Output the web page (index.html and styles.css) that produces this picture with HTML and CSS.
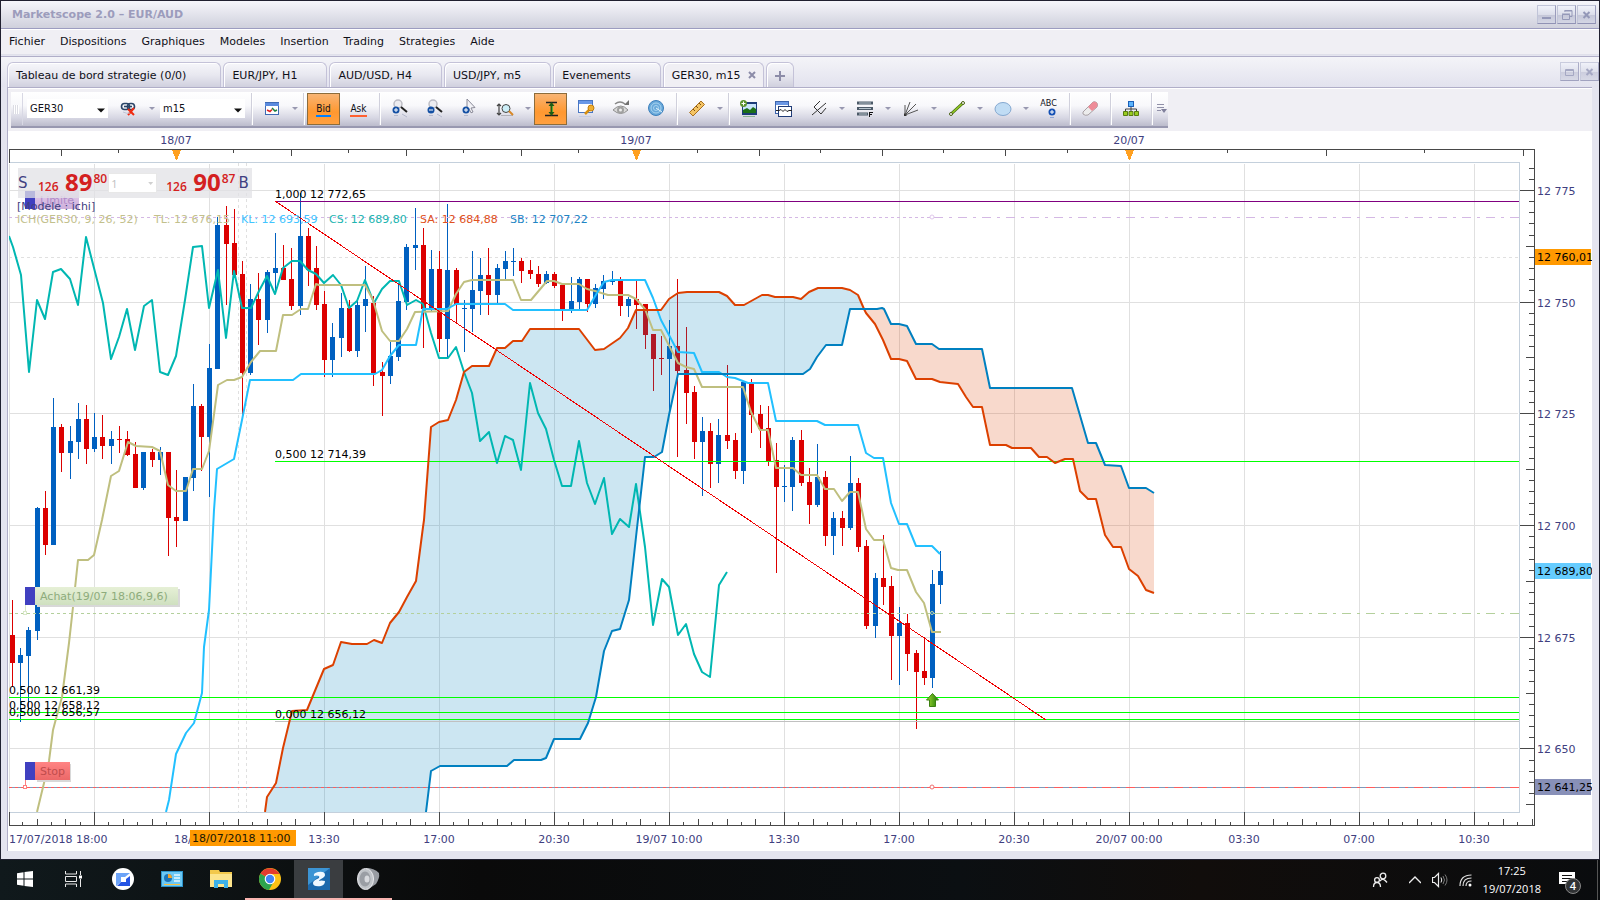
FILE: index.html
```html
<!DOCTYPE html>
<html lang="fr">
<head>
  <meta charset="UTF-8">
  <meta name="viewport" content="width=device-width, initial-scale=1.0">
  <title>Marketscope 2.0 – EUR/AUD</title>
  <link rel="stylesheet" href="styles.css">
</head>
<body>
  <div class="window">
    <header class="title-bar">
      <h1>Marketscope 2.0 – EUR/AUD</h1>
      <div class="win-buttons">
        <button class="win-btn" aria-label="Minimize"><svg viewBox="0 0 17 17"><path d="M4 12h9" stroke-width="2"/></svg></button>
        <button class="win-btn" aria-label="Restore"><svg viewBox="0 0 17 17"><path d="M4.500 8.500h7v5h-7zM4 8h8M7 5.500v-1h7v6h-2M6 5h8"/></svg></button>
        <button class="win-btn" aria-label="Close"><svg viewBox="0 0 17 17"><path d="M5.500 6l6 6M11.500 6l-6 6" stroke-width="2"/></svg></button>
      </div>
    </header>

    <nav class="menu-bar">
      <button>Fichier</button>
      <button>Dispositions</button>
      <button>Graphiques</button>
      <button>Modeles</button>
      <button>Insertion</button>
      <button>Trading</button>
      <button>Strategies</button>
      <button>Aide</button>
    </nav>

    <div class="tab-strip">
      <div class="tabs">
        <button class="tab board">Tableau de bord strategie (0/0)</button>
        <button class="tab">EUR/JPY, H1</button>
        <button class="tab">AUD/USD, H4</button>
        <button class="tab">USD/JPY, m5</button>
        <button class="tab">Evenements</button>
        <button class="tab active">GER30, m15 <svg width="8" height="8" viewBox="0 0 8 8"><path d="M1 1l6 6M7 1l-6 6" stroke="#8c8ca8" stroke-width="2"/></svg></button>
        <button class="tab add" aria-label="New tab"><svg width="12" height="12" viewBox="0 0 12 12"><path d="M6 1v10M1 6h10" stroke="#8c8ca8" stroke-width="2"/></svg></button>
      </div>
      <div class="win-buttons light">
        <button class="win-btn" aria-label="Maximize"><svg viewBox="0 0 17 17"><path d="M4.500 6.500h8v6h-8zM4 7.500h9"/></svg></button>
        <button class="win-btn" aria-label="Close chart"><svg viewBox="0 0 17 17"><path d="M5.500 6l6 6M11.500 6l-6 6" stroke-width="2"/></svg></button>
      </div>
    </div>

    <main class="panel">
      <div class="toolbar-row">
        <div class="toolbar">
          <span class="grip"></span>
          <span class="combo"><select aria-label="Symbol"><option>GER30</option></select></span>
          <button class="tool" aria-label="Unlink">
            <svg viewBox="0 0 20 20"><g fill="none" stroke="#2c4668" stroke-width="1.600"><rect x="2.500" y="4.500" width="8" height="6" rx="3"/><rect x="8.500" y="4.500" width="7" height="6" rx="3"/><path d="M5 7.500h8"/></g><path d="M9 10l6 6M15 9l-6 7" stroke="#f02a10" stroke-width="2"/><path d="M4 13q4 2 7 1" stroke="#c0c4d4" fill="none"/></svg>
          </button>
          <button class="drop" aria-label="Link options"></button>
          <span class="combo wide"><select aria-label="Period"><option>m15</option></select></span>
          <span class="sep"></span>
          <button class="tool" aria-label="Chart type">
            <svg viewBox="0 0 20 20"><rect x="3.500" y="3.500" width="13" height="12" fill="#fff" stroke="#3f6ab4"/><path d="M3 4h14v3H3z" fill="#5a8ade"/><path d="M5 11l3 1.500 2-2" fill="none" stroke="#e02020" stroke-width="1.500"/><path d="M10 9l3 3 2-1" fill="none" stroke="#208040" stroke-width="1.500"/><path d="M4 17.500h12" stroke="#d8dcec"/></svg>
          </button>
          <button class="drop" aria-label="Chart type options"></button>
          <span class="sep"></span>
          <button class="tool side on"><span class="bid">Bid</span></button>
          <button class="tool side"><span class="ask">Ask</span></button>
          <span class="sep"></span>
          <button class="tool" aria-label="Zoom in">
            <svg viewBox="0 0 20 20"><circle cx="8" cy="5" r="4" fill="#ececf0" stroke="#bcbcc4" stroke-width="1.500"/><path d="M11 8l6 5" stroke="#222" stroke-width="2"/><circle cx="6" cy="11" r="3.500" fill="#1450a4"/><path d="M4 11h4M6 9v4" stroke="#fff"/><path d="M4 16.500h4M12 15l5 3" stroke="#b4b8cc"/></svg>
          </button>
          <button class="tool" aria-label="Zoom out">
            <svg viewBox="0 0 20 20"><circle cx="8" cy="5" r="4" fill="#ececf0" stroke="#bcbcc4" stroke-width="1.500"/><path d="M11 8l6 5" stroke="#222" stroke-width="2"/><circle cx="6" cy="11" r="3.500" fill="#1450a4"/><path d="M4 11h4" stroke="#fff"/><path d="M4 16.500h4M12 15l5 3" stroke="#b4b8cc"/></svg>
          </button>
          <button class="tool" aria-label="Add pointer">
            <svg viewBox="0 0 20 20"><path d="M7 0l8 8.500-4 .5 2 4-2 .8-2-4-2 2z" fill="#f2f2f6" stroke="#8a8a98"/><circle cx="6" cy="11" r="3.500" fill="#1450a4"/><path d="M4 11h4M6 9v4" stroke="#fff"/><path d="M4 16.500h4" stroke="#b4b8cc"/></svg>
          </button>
          <button class="tool" aria-label="Zoom area">
            <svg viewBox="0 0 20 20"><path d="M4 5v11M2 7l2-2 2 2M2 14l2 2 2-2" fill="none" stroke="#444" stroke-width="1.200"/><path d="M6 16.500h12" stroke="#b0b0b8"/><circle cx="11" cy="9.500" r="4" fill="#cceef8" stroke="#444"/><path d="M14 12l4 4" stroke="#d88828" stroke-width="2"/></svg>
          </button>
          <button class="drop" aria-label="Zoom options"></button>
          <button class="tool on" aria-label="Auto scale">
            <svg viewBox="0 0 20 20"><path d="M5 3.500h11M4 16.500h13" stroke="#222" stroke-width="1.500"/><path d="M10.500 3l3 4h-2v6h2l-3 4-3-4h2V7h-2z" fill="#1e5c14"/><path d="M11.500 7v6" stroke="#60b030"/></svg>
          </button>
          <button class="tool" aria-label="Edit properties">
            <svg viewBox="0 0 20 20"><rect x="2.500" y="1.500" width="14" height="12" fill="#fff" stroke="#4876c4"/><path d="M3 2h13v3H3z" fill="#6a98e8"/><path d="M9 15l5-5" stroke="#d89010" stroke-width="2.500"/><circle cx="15" cy="9" r="3" fill="#f0b030" stroke="#c07c10"/><path d="M3 17.500h12" stroke="#c4cce4"/></svg>
          </button>
          <button class="tool" aria-label="Toggle visibility">
            <svg viewBox="0 0 20 20"><path d="M2 11q8-8 15 0-7 7-15 0z" fill="#d8d8d8" stroke="#909090"/><circle cx="9.500" cy="11" r="3.500" fill="#a0a0a0"/><circle cx="9.500" cy="11" r="1.500" fill="#eee"/><path d="M4 5q5-4 10 0" fill="none" stroke="#888" stroke-width="1.500"/><path d="M13 6h5V1z" fill="#707070"/></svg>
          </button>
          <button class="tool" aria-label="Radar">
            <svg viewBox="0 0 20 20"><circle cx="10" cy="9" r="7.500" fill="#68a8da" stroke="#3c80bc"/><circle cx="10" cy="9" r="5" fill="none" stroke="#a8d4f0"/><circle cx="10" cy="9" r="2.500" fill="none" stroke="#a8d4f0"/><path d="M10 9l6 4" stroke="#e4f4fc"/></svg>
          </button>
          <span class="sep"></span>
          <button class="tool" aria-label="Ruler">
            <svg viewBox="0 0 20 20"><path d="M2.500 13.500L14 2l3.500 3.500L6 17z" fill="#f4c464" stroke="#a87020"/><path d="M6 10l2 2M9 7l2 2M12 4l2 2" stroke="#7c5010"/></svg>
          </button>
          <button class="drop" aria-label="Ruler options"></button>
          <span class="sep"></span>
          <button class="tool" aria-label="Add indicator">
            <svg viewBox="0 0 20 20"><rect x="3" y="3" width="15" height="13" fill="#1c3c78"/><path d="M4 5h13v7H4z" fill="#c8e4fc"/><path d="M4 14v-3l4-2 3 2 3-3 3 2v4z" fill="#1c7018"/><circle cx="4.500" cy="4.500" r="3.500" fill="#5c9430"/><path d="M2.500 4.500h4M4.500 2.500v4" stroke="#fff"/><path d="M4 17.500h12" stroke="#88b490"/></svg>
          </button>
          <button class="tool" aria-label="Add chart window">
            <svg viewBox="0 0 20 20"><rect x="1.500" y="2.500" width="13" height="12" fill="#fff" stroke="#3c64ac"/><path d="M2 3h12v3H2z" fill="#6c98e4"/><rect x="4.500" y="7.500" width="13" height="10" fill="#fff" stroke="#203c78"/><path d="M2 11.500h3l2-1 2 2 2-2 2 2 2-1h3" fill="none" stroke="#222"/></svg>
          </button>
          <button class="tool" aria-label="Pitchfork">
            <svg viewBox="0 0 20 20"><path d="M3 16l14-12M5 8l7 7M5 8l6-6M12 15l5-6" fill="none" stroke="#333"/></svg>
          </button>
          <button class="drop" aria-label="Pitchfork options"></button>
          <button class="tool" aria-label="Fibonacci">
            <svg viewBox="0 0 20 20"><path d="M2 4h16M2 9.500h16M2 15h11" stroke="#4c5a68" stroke-width="3"/><path d="M4 4h12M4 9.500h12M4 15h8" stroke="#b8c4cc"/><path d="M14.500 18v-5M14 13.500h4M14 15.500h3" stroke="#111" fill="none"/></svg>
          </button>
          <button class="drop" aria-label="Fibonacci options"></button>
          <button class="tool" aria-label="Fan">
            <svg viewBox="0 0 20 20"><path d="M4 16V6M4 16L9 3M4 16L15 5M4 16l13-5" fill="none" stroke="#555"/><path d="M3 14v3h3z" fill="#333"/></svg>
          </button>
          <button class="drop" aria-label="Fan options"></button>
          <button class="tool" aria-label="Line">
            <svg viewBox="0 0 20 20"><path d="M4 15L16 4" stroke="#486c10" stroke-width="3"/><path d="M4 15L16 4" stroke="#94cc28" stroke-width="1.500"/><circle cx="4" cy="15" r="1.500" fill="#fff" stroke="#486010"/><circle cx="16" cy="4" r="1.500" fill="#fff" stroke="#486010"/></svg>
          </button>
          <button class="drop" aria-label="Line options"></button>
          <button class="tool" aria-label="Ellipse">
            <svg viewBox="0 0 20 20"><ellipse cx="10" cy="10" rx="8" ry="6.500" fill="#c0dcf4" stroke="#84a8d0"/></svg>
          </button>
          <button class="drop" aria-label="Shape options"></button>
          <button class="tool abc" aria-label="Text label"><span>ABC</span>
            <svg viewBox="0 0 20 12"><circle cx="13" cy="4" r="3.500" fill="#1450b4"/><path d="M11 4h4M13 2v4" stroke="#fff"/><path d="M11 9.500h4" stroke="#90a8d8"/></svg>
          </button>
          <span class="sep"></span>
          <button class="tool" aria-label="Eraser">
            <svg viewBox="0 0 20 20"><path d="M3 13L13 3q2-1 4 1 1 2 0 4L8 16q-3 1-5-1z" fill="#ececec" stroke="#a8a0a4"/><path d="M8 8l5-5q2-1 4 1 1 2 0 4l-5 4z" fill="#ee8c98"/></svg>
          </button>
          <span class="sep"></span>
          <button class="tool" aria-label="Object tree">
            <svg viewBox="0 0 20 20"><rect x="7.500" y="2.500" width="5" height="5" fill="#5cb4fc" stroke="#1c60b8"/><path d="M10 8v5M4.500 13v-3h11v3" fill="none" stroke="#444"/><path d="M2.500 12.500h4v4h-4zM8 12.500h4v4H8zM13.500 12.500h4v4h-4z" fill="#98cc20" stroke="#587c10"/></svg>
          </button>
          <span class="sep"></span>
          <button class="overflow" aria-label="More tools"><svg width="10" height="10" viewBox="0 0 10 10"><path d="M0 1.500h7M0 4.500h7M0 7.500h4" stroke="#9090a8"/><path d="M4 6h6l-3 4z" fill="#80809c"/></svg></button>
        </div>
      </div>

      <div class="chart">
        <svg class="chart-svg" viewBox="8 131 1584 720" role="img" aria-label="GER30 m15">
          <defs>
            <linearGradient id="buyFill" x2="0" y2="1"><stop stop-color="#e6f0d6"/><stop offset="1" stop-color="#cfe0c0"/></linearGradient>
            <linearGradient id="stopFill" x2="0" y2="1"><stop stop-color="#ff8484"/><stop offset="1" stop-color="#ec6868"/></linearGradient>
            <linearGradient id="limitFill" x2="0" y2="1"><stop stop-color="#e4ccec"/><stop offset="1" stop-color="#ceb0dc"/></linearGradient>
            <linearGradient id="arrowFill"><stop stop-color="#a4dc30"/><stop offset="1" stop-color="#1c7808"/></linearGradient>
            <clipPath id="plot"><path d="M9 162h1510v650H9z"/></clipPath>
          </defs>
          <g id="grid" class="grid"></g>
          <g clip-path="url(#plot)">
            <g id="candles" class="crisp"></g>
            <g id="clouds"></g>
            <g id="levels" class="crisp"></g>
            <g id="lines"></g>
            <path class="trend" d="M275 201L1046 720"/>
          </g>
          <g id="axes" class="axes"></g>

          <g class="tag">
            <path d="M25 191h10v18H25z" fill="#4040c0"/>
            <path d="M35 191h44v18H35z" fill="url(#limitFill)"/>
            <text x="40" y="204" fill="#b08cc8">Limite</text>
          </g>
          <text x="17" y="210" fill="#404080">[Modele : ichi]</text>
          <g class="legend">
            <text x="17" y="223" fill="#c2c08c">ICH(GER30, 9, 26, 52)</text>
            <text x="154" y="223" fill="#c2c08c">TL: 12 676,15</text>
            <text x="241" y="223" fill="#40c4ff">KL: 12 693,59</text>
            <text x="329" y="223" fill="#20b4b0">CS: 12 689,80</text>
            <text x="420" y="223" fill="#e05020">SA: 12 684,88</text>
            <text x="510" y="223" fill="#2084c4">SB: 12 707,22</text>
          </g>

          <g class="fib">
            <text x="275" y="198">1,000 12 772,65</text>
            <text x="275" y="458">0,500 12 714,39</text>
            <text x="275" y="718">0,000 12 656,12</text>
            <text x="9" y="694">0,500 12 661,39</text>
            <text x="9" y="709">0,500 12 658,12</text>
            <text x="9" y="716">0,500 12 656,57</text>
          </g>

          <g class="tag">
            <path d="M37 589h143v18H37z" fill="#d8d8d8"/>
            <path d="M25 587h10v18H25z" fill="#4040c0"/>
            <path d="M35 587h143v18H35z" fill="url(#buyFill)"/>
            <path d="M25.500 605v6" stroke="#d8e8c8"/><circle cx="25" cy="613" r="2" fill="#fff" stroke="#d8e8c8"/>
            <text x="40" y="600" fill="#8eac7c">Achat(19/07 18:06,9,6)</text>
          </g>
          <g class="tag">
            <path d="M37 764h34v18H37z" fill="#d8d8d8"/>
            <path d="M25 762h10v18H25z" fill="#4040c0"/>
            <path d="M35 762h35v18H35z" fill="url(#stopFill)"/>
            <path d="M25.500 780v6" stroke="#ff8080"/><circle cx="25" cy="787" r="2" fill="#fff" stroke="#ff8080"/>
            <text x="40" y="775" fill="#c04c4c">Stop</text>
          </g>
          <circle cx="932" cy="217" r="2" fill="#fff" stroke="#e0c8ec"/>
          <circle cx="932" cy="613" r="1.500" fill="none" stroke="#c0d8a8"/>
          <circle cx="932" cy="787" r="2" fill="#fff" stroke="#f07070"/>
          <path d="M932.500 693.500l6 6.500h-3v6.500h-6v-6.500h-3z" fill="url(#arrowFill)" stroke="#3c8010"/>

          <g class="price-box">
            <path d="M1535 249h56v16h-56z" fill="#ff9900"/><text x="1537" y="261">12 760,01</text>
            <path d="M1535 563h56v16h-56z" fill="#66ccff"/><text x="1537" y="575">12 689,80</text>
            <path d="M1535 779h56v16h-56z" fill="#8890b8"/><text x="1537" y="791">12 641,25</text>
          </g>
          <text class="axis-text" x="174" y="843">18/</text>
          <path d="M190 830h106v16H190z" fill="#ff9900"/>
          <text x="192" y="842" fill="#201800">18/07/2018 11:00</text>
        </svg>

        <div class="quote">
          <span class="side-letter">S</span>
          <span class="q-small">126</span><span class="q-big">89</span><span class="q-sup">80</span>
          <span class="amount"><select aria-label="Amount"><option>1</option></select></span>
          <span class="q-small">126</span><span class="q-big">90</span><span class="q-sup">87</span>
          <span class="side-letter buy">B</span>
        </div>
      </div>
    </main>
  </div>

  <footer class="taskbar">
    <div class="apps">
      <button class="app" aria-label="Start"><svg viewBox="0 0 24 24"><path d="M4 6.200l6.500-1v6.300H4zM11.500 5L20 4v7.500h-8.500zM4 12.500h6.500v6.300L4 17.800zM11.500 12.500H20V20l-8.500-1z" fill="#fff"/></svg></button>
      <button class="app" aria-label="Task view"><svg viewBox="0 0 24 24"><path d="M3.500 4v3h11V4M3.500 20v-3h11v3M3.500 9.500h11v5h-11zM18.500 4v4M18.500 12v8" fill="none" stroke="#e8e8e8"/><path d="M17 8.500h3v3h-3z" fill="#fff"/></svg></button>
      <button class="app" aria-label="Browser"><svg viewBox="0 0 24 24"><circle cx="12" cy="12" r="11" fill="#fff"/><path d="M5 6h14l-5 4h-4v5l-5 4z" fill="#6ca4f8"/><path d="M19 9v10H6l4-4h5v-3z" fill="#2454e4"/></svg></button>
      <button class="app" aria-label="Control panel"><svg viewBox="0 0 24 24"><rect x="1.500" y="4.500" width="21" height="15" fill="#6cc8f4" stroke="#2c94cc"/><circle cx="8" cy="11" r="4" fill="#1c74b8"/><path d="M8 11V7a4 4 0 0 1 4 4z" fill="#f4a428"/><path d="M14 8h6M14 11h6M14 14h6" stroke="#e4f6ff" stroke-width="1.500"/><path d="M4 17.500h16" stroke="#f8c040"/></svg></button>
      <button class="app" aria-label="Explorer"><svg viewBox="0 0 24 24"><path d="M1 3h9l1 2h12v15H1z" fill="#f2c84c"/><path d="M1 7h22v13H1z" fill="#fce48c"/><path d="M5 21v-8h14v8h-4v-4H9v4z" fill="#3cb0e8"/></svg></button>
      <button class="app open" aria-label="Chrome"><svg viewBox="0 0 24 24"><circle cx="12" cy="12" r="11" fill="#fbc116"/><path d="M12 12L2.500 6.500A11 11 0 0 0 11 23l5-9z" fill="#2da44e"/><path d="M12 12L2.500 6.500A11 11 0 0 1 21.500 7H12z" fill="#e33b2e"/><circle cx="12" cy="12" r="5.300" fill="#fff"/><circle cx="12" cy="12" r="4.200" fill="#4285f4"/></svg></button>
      <button class="app open current" aria-label="Trading Station"><svg viewBox="0 0 24 24"><rect x="1" y="1" width="22" height="22" fill="#1c68ac"/><path d="M1 1h22L1 18z" fill="#3c94d4"/><path d="M7 9q-1-3 4-4 7-1 7 3 0 2-4 4-2 1-2 2 2-1 6 0 0 4-4 5-8 1-8-3 0-2 4-4 3-1 2-3-2-1-5 0z" fill="#f0f8ff"/></svg></button>
      <button class="app open" aria-label="Sound"><svg viewBox="0 0 24 24"><path d="M10 1q8 0 13 5 1 5-3 11l-9 6z" fill="#989ca2"/><ellipse cx="9.500" cy="12" rx="8" ry="10.500" fill="#c0c4c8" stroke="#e8e8ec"/><ellipse cx="9" cy="12" rx="5.500" ry="7.500" fill="#9a9ea4"/><ellipse cx="11" cy="12" rx="2.500" ry="3.500" fill="#d8dade"/></svg></button>
    </div>
    <div class="tray">
      <button class="people" aria-label="People"><svg width="16" height="16" viewBox="0 0 16 16"><g fill="none" stroke="#eee" stroke-width="1.300"><circle cx="11" cy="4" r="2.800"/><circle cx="5" cy="8" r="2.400"/><path d="M1.500 15q0-4.500 3.500-4.500T8.500 15M8 9q3-4 7 1.500"/></g></svg></button>
      <button aria-label="Hidden icons"><svg width="12" height="16" viewBox="0 0 12 16"><path d="M0 11l6-6 6 6" fill="none" stroke="#eee" stroke-width="1.400"/></svg></button>
      <button aria-label="Volume"><svg width="16" height="16" viewBox="0 0 16 16"><path d="M.5 5.500h2l4-4v13l-4-4h-2z" fill="none" stroke="#eee" stroke-width="1.200"/><path d="M9 5.500q1.500 2.500 0 5" fill="none" stroke="#eee"/><path d="M11 4q3 4 0 8M13 2.500q4 5.500 0 11" fill="none" stroke="#777"/></svg></button>
      <button aria-label="Network"><svg width="13" height="14" viewBox="0 0 13 14"><path d="M1 13Q1 2 12.500 2M4 13Q4 5 12.500 5M7 13Q7 8 12.500 8" fill="none" stroke="#ddd" stroke-width="1.200"/><circle cx="11" cy="12" r="1.500" fill="#fff"/></svg></button>
      <div class="clock"><time>17:25</time><span>19/07/2018</span></div>
      <button class="notif" aria-label="Notifications"><svg width="18" height="18" viewBox="0 0 18 18"><path d="M1 1h16v12h-5l-3 3v-3H1z" fill="#fff"/><path d="M4 4.500h10M4 7.500h10M4 10.500h6" stroke="#111"/></svg><span>4</span></button>
      <span class="show-desktop"></span>
    </div>
  </footer>
  <script src="chart.js"></script>
</body>
</html>
```
FILE: styles.css
```css
* {
  box-sizing: border-box;
}

:root {
  --face: #f0eff4;
  --edge: #b0aec8;
  --lilac: #e4e4ef;
  --ink: #404080;
  --sans: "DejaVu Sans", Verdana, sans-serif;
}

body {
  margin: 0;
  font-family: var(--sans);
  font-size: 11px;
  color: #101018;
  background: #0a0c0e;
}

button,
select {
  margin: 0;
  padding: 0;
  border: 0;
  background: none;
  font: inherit;
  color: inherit;
}

/* Window frame */
.window {
  border: 1px solid #202030;
  background: var(--lilac);
}

.title-bar {
  display: flex;
  align-items: center;
  justify-content: space-between;
  height: 28px;
  padding: 0 3px 0 11px;
  background: linear-gradient(#f6f6fb, #cfd0dc);
  border-bottom: 1px solid #9c9cc0;
}

.title-bar h1 {
  margin: 0;
  font-size: 11px;
  font-weight: bold;
  color: #9c9cbc;
}

.win-buttons {
  display: flex;
  gap: 1px;
}

.win-btn {
  width: 19px;
  height: 19px;
  border: 1px solid #b4b8d0;
  border-color: #c0c4d8 #9a9cbc #9092b4 #c0c4d8;
  background: linear-gradient(#f0f2fa, #dcdeea 50%, #c4c6d8 51%, #d4d6e4);
}

.win-btn svg {
  display: block;
  fill: none;
  stroke: #9498b8;
}

.light {
  opacity: 0.8;
}

.menu-bar {
  display: flex;
  gap: 15px;
  height: 26px;
  padding: 0 8px 2px;
  background: var(--face);
  border-top: 1px solid #fff;
  border-bottom: 1px solid #e0e0ea;
}

/* Tabs */
.tab-strip {
  display: flex;
  justify-content: space-between;
  align-items: flex-end;
  height: 31px;
  margin-top: 1px;
  padding-left: 6px;
  border-top: 1px solid var(--edge);
  background: linear-gradient(#f4f4f8, #e2e2ee);
}

.tab-strip .win-buttons {
  align-self: flex-start;
  margin-top: 5px;
}

.tabs {
  display: flex;
  gap: 2px;
}

.tab {
  height: 25px;
  padding: 0 29px 0 8px;
  border: 1px solid #c4c2d8;
  border-bottom: 0;
  border-radius: 6px 6px 0 0;
  background: linear-gradient(#f6f6fa, #e8e8f0 50%, #d0d0de);
  box-shadow: inset 1px 1px #fff;
}

.tab.board {
  padding-right: 34px;
}

.tab.active {
  padding-right: 7px;
  background: var(--face);
}

.tab.active svg {
  margin-left: 4px;
}

.tab.add {
  width: 28px;
  padding: 4px 0 0;
}

/* Toolbar */
.panel {
  margin: 0 7px 8px 6px;
  border: 1px solid var(--edge);
  border-width: 1px 0 0 1px;
  background: #fff;
}

.toolbar-row {
  display: flex;
  padding: 3px 3px 4px;
  height: 43px;
  border-top: 1px solid #fff;
  background: var(--face);
}

.toolbar {
  display: flex;
  align-items: center;
  height: 36px;
  border-bottom: 2px solid #9898b0;
  background: linear-gradient(#fff, #f8f8fb 40%, #d8d8e4 75%, #bcbccc);
}

.grip {
  width: 12px;
  height: 32px;
  margin-right: 4px;
  border-right: 1px solid #d8d8e4;
  background: repeating-linear-gradient(90deg, #dcdce4 0 1px, #fff 1px 2px) 2px 12px / 6px 9px no-repeat;
}

.combo {
  position: relative;
  width: 81px;
  height: 19px;
  margin: 0 4px 2px 0;
  background: #fff;
}

.combo.wide {
  width: 85px;
  margin-left: 2px;
}

.combo select {
  width: 100%;
  height: 19px;
  padding: 0 3px;
  appearance: none;
  font-family: "DejaVu Sans Condensed", "DejaVu Sans", sans-serif;
}

.combo::after {
  content: "";
  position: absolute;
  right: 1px;
  bottom: 0;
  width: 13px;
  height: 14px;
  background: #111;
  clip-path: polygon(3px 5px, 11px 5px, 7px 9px);
}

.tool {
  display: flex;
  align-items: center;
  justify-content: center;
  width: 33px;
  height: 32px;
  margin-right: 2px;
}

.tool svg {
  width: 20px;
  height: 20px;
}

.tool.on {
  border: 1px solid #8c6c3c;
  background: linear-gradient(#f8b474, #ff9830 60%, #ffa040);
}

.side {
  font-family: "DejaVu Sans Condensed", "DejaVu Sans", sans-serif;
  font-size: 10px;
}

.bid,
.ask {
  line-height: 13px;
  border-bottom: 2px solid #0080ff;
}

.ask {
  border-color: #ff6030;
}

.abc {
  flex-direction: column;
  font-family: "DejaVu Sans Condensed", "DejaVu Sans", sans-serif;
  font-size: 9px;
  line-height: 9px;
}

.abc svg {
  height: 12px;
}

.drop {
  width: 11px;
  height: 32px;
  background: #9898b0;
  clip-path: polygon(2px 14px, 8px 14px, 5px 17px);
}

.sep {
  width: 2px;
  height: 32px;
  margin: 0 2px;
  border-left: 1px solid #d0d0dc;
  border-right: 1px solid #fff;
}

.overflow {
  width: 13px;
  height: 32px;
}

/* Chart */
.chart {
  position: relative;
}

.chart-svg {
  display: block;
  width: 100%;
  height: auto;
  font-size: 11px;
}

.grid,
.axes,
.crisp,
.tag,
.trend {
  shape-rendering: crispEdges;
}

.grid path {
  fill: none;
  stroke: #e0e0e0;
}

.grid .dashed {
  stroke-dasharray: 3 3;
}

.axes path {
  fill: none;
  stroke: #484848;
}

.axes .frame {
  stroke: #c4d0dc;
}

.axes .day {
  fill: #ffa020;
  stroke: none;
}

.axes text,
.axis-text {
  fill: var(--ink);
}

.axes .mid {
  text-anchor: middle;
}

.trend {
  fill: none;
  stroke: #f00000;
}

.up {
  fill: #0060c0;
}

.down {
  fill: #dc0000;
}

.line {
  fill: none;
  stroke-width: 2;
  stroke-linejoin: round;
}

.tl { stroke: #bfbf7f; }
.kl { stroke: #22c0ff; }
.cs { stroke: #00b7b2; }
.sa { stroke: #dc4000; }
.sb { stroke: #0080c0; }

.cloud-up {
  fill: #0080c0;
  opacity: 0.2;
}

.cloud-down {
  fill: #dc4000;
  opacity: 0.2;
}

.quote {
  position: absolute;
  left: 10px;
  top: 37px;
  display: flex;
  align-items: center;
  width: 234px;
  height: 30px;
  background: rgba(226, 226, 229, 0.75);
  color: #d42020;
  font-family: "Open Sans", sans-serif;
}

.side-letter {
  width: 11px;
  font: 15px var(--sans);
  color: var(--ink);
}

.side-letter.buy {
  margin-left: 3px;
}

.q-small {
  width: 20px;
  margin: 6px 7px 0 9px;
  font-size: 12px;
  font-weight: 600;
}

.q-big {
  margin-bottom: 4px;
  font-size: 24px;
  font-weight: bold;
}

.q-sup {
  margin: -10px 0 0 1px;
  font-size: 12px;
  font-weight: 600;
}

.amount {
  position: relative;
  width: 49px;
  height: 20px;
  margin-left: 1px;
  background: #fff;
  border: 1px solid #e8e8e8;
  color: #c0c0c0;
}

.amount select {
  width: 100%;
  height: 18px;
  padding-left: 2px;
  appearance: none;
}

.amount::after {
  content: "";
  position: absolute;
  right: 3px;
  top: 8px;
  width: 5px;
  height: 3px;
  background: #d0d0d0;
  clip-path: polygon(0 0, 100% 0, 50% 100%);
}

/* Taskbar */
.taskbar {
  display: flex;
  justify-content: space-between;
  height: 40px;
  background: linear-gradient(90deg, #10191c, #0a0a0a 30%, #0b0f12 60%, #110d0b 75%, #0a0c0e);
  color: #fff;
}

.apps {
  display: flex;
}

.app {
  display: flex;
  align-items: center;
  justify-content: center;
  width: 49px;
  border-bottom: 2px solid transparent;
}

.app svg {
  width: 24px;
  height: 24px;
}

.app.open {
  border-color: #f8b4b0;
}

.app.current {
  background: #3a3d40;
}

.tray {
  display: flex;
  align-items: center;
  gap: 11px;
}

.tray svg {
  display: block;
}

.people {
  margin-right: 10px;
}

.clock {
  display: flex;
  flex-direction: column;
  align-items: center;
  font: 11px/18px "Open Sans", sans-serif;
}

.notif {
  position: relative;
  margin: 0 10px 0 6px;
}

.notif span {
  position: absolute;
  left: 7px;
  top: 7px;
  width: 16px;
  height: 16px;
  border: 1px solid #888;
  border-radius: 50%;
  background: #303234;
  font: 600 11px/14px "Open Sans", sans-serif;
}

.show-desktop {
  height: 40px;
  width: 3px;
  border-left: 1px solid #555;
}
```
FILE: chart.js
```js
// high, body top, body bottom, low for every m15 bar; r = falling, b = rising
const bars = `
r600,635,663,687 b648,655,663,722 b627,630,656,710 b507,508,631,640 r491,508,545,555 b398,427,545,545
r424,427,453,472 b426,441,453,479 b403,419,442,459 r405,419,449,464 b413,437,449,452 r415,437,446,459
b431,439,446,464 r426,439,440,453 r431,439,455,456 r442,454,488,488 b452,452,488,490 r449,452,460,467
b447,452,460,475 r452,452,518,556 r470,517,521,547 b477,477,521,521 b384,406,478,491 r404,406,437,471
b344,368,437,497 b217,225,369,369 r206,225,244,305 r209,243,275,275 r261,274,373,417 b284,299,373,375
r273,299,320,345 b270,272,320,333 b233,268,273,290 r245,268,280,280 r248,279,306,310 b193,236,306,315
r228,236,270,286 r246,268,305,310 r291,304,360,377 b323,337,360,377 b293,308,338,357 r300,308,351,352
b298,305,351,357 b266,299,306,332 r296,303,373,386 r362,372,376,416 b342,356,376,384 b283,301,357,361
b244,247,302,310 b208,245,248,270 r228,245,309,348 b250,269,309,311 r251,269,339,352 b204,270,339,357
r268,270,304,324 b300,308,309,352 b251,290,309,332 b258,275,291,315 r248,275,295,315 b264,268,295,303
b251,261,269,279 b248,261,262,276 r258,261,271,283 r260,270,274,279 r266,274,284,287 b271,274,283,284
r272,274,286,288 r285,285,309,321 b277,301,309,313 b277,279,302,309 r279,279,304,312 b284,288,304,308
b275,281,289,299 b271,281,282,285 r277,279,306,316 b297,299,306,317 r280,299,305,329 r304,304,335,349
r334,334,359,391 r336,358,359,375 b320,346,359,412 r279,346,371,457 r327,370,393,424 r386,392,442,459
b417,431,442,496 r423,431,464,488 b419,435,464,483 r365,435,441,449 r433,440,471,479 b382,382,471,484
r379,384,415,433 r405,414,429,448 r406,428,461,466 r443,460,487,573 b465,486,487,502 b437,440,487,511
r430,440,483,486 r468,482,505,524 b444,477,505,507 r471,477,536,546 b512,518,536,555 r511,518,528,546
b456,483,528,530 r478,483,547,552 r540,546,626,629 b573,578,626,638 r535,578,587,605 r576,586,636,680
b607,623,636,685 r614,623,654,671 r650,653,672,729 r637,671,678,685 b570,584,678,688 b551,571,585,604`
  .trim().split(/\s+/);

const tl = '37,812 44,783 49,761 53,730 57,715 62,697 69,643 73,607 78,560 88,560 94,555 102,520 111,476 119,471 128,442 136,446 152,447 160,451 168,485 176,491 186,491 193,469 202,469 209,451 218,385 227,380 234,380 242,377 251,362 260,351 276,351 283,315 292,315 301,309 308,309 316,284 319,285 365,285 373,300 382,331 390,341 399,341 407,329 415,312 448,311 456,294 464,282 472,280 513,280 521,300 531,300 547,281 554,281 562,284 579,284 587,289 595,291 608,295 628,295 636,299 645,309 653,330 661,330 678,363 686,367 694,369 702,387 743,387 751,412 760,430 768,430 776,468 793,468 801,475 817,475 825,489 834,489 842,501 850,492 858,492 866,529 874,540 883,540 891,568 898,570 907,570 916,592 924,603 932,632 941,632';
const kl = '166,812 169,800 176,754 186,733 194,723 202,693 204,647 209,610 214,510 217,469 234,459 242,420 250,380 293,380 301,374 375,374 382,370 390,356 399,345 416,345 423,309 447,309 456,304 505,304 513,310 587,310 597,293 604,282 612,280 645,280 653,298 661,320 678,352 694,353 702,372 719,372 727,377 735,378 748,383 768,383 776,421 817,421 825,425 858,425 866,453 874,458 883,458 891,503 899,524 907,524 916,546 932,546 940,554';
const cs = '9,236 13,247 21,275 29,372 37,300 45,319 53,272 61,269 70,279 78,305 86,237 103,303 111,359 119,337 127,309 135,350 144,306 152,300 160,372 168,375 176,356 185,300 193,247 202,246 209,308 218,270 226,338 234,271 242,308 251,308 259,291 267,276 275,294 283,268 292,261 300,261 308,270 316,274 324,283 333,275 341,285 349,308 357,301 365,280 374,303 382,289 390,281 399,281 407,305 416,300 423,304 431,333 439,358 448,358 456,347 464,372 472,393 480,441 489,432 497,463 505,436 513,440 521,470 530,383 538,413 546,429 554,460 562,486 571,486 579,441 587,483 595,504 604,478 612,534 620,519 629,527 636,484 645,547 653,625 662,579 669,587 678,635 686,624 694,654 702,672 710,677 719,585 727,572';
const saUp = '265,812 267,797 276,783 283,748 292,711 307,710 324,669 333,665 341,642 352,644 367,644 374,640 382,643 390,623 399,612 407,597 416,581 423,527 424,520 431,427 439,422 448,420 456,400 464,372 472,366 489,366 497,348 505,348 513,341 522,341 530,329 579,329 595,350 604,349 620,338 628,328 636,310 661,310 669,299 678,293 687,292 719,292 727,296 735,305 744,305 762,295 768,295 775,297 793,297 801,299 809,292 818,288 842,288 850,290 858,295 864,309';
const saDown = '864,309 866,313 875,324 883,340 891,359 899,359 907,361 916,379 932,379 940,382 958,384 966,397 973,407 982,407 990,445 1006,445 1012,448 1031,448 1039,457 1047,457 1055,463 1065,459 1073,459 1080,491 1088,499 1096,499 1105,535 1113,547 1121,547 1129,569 1138,576 1146,590 1154,593';
const sbUp = '426,812 431,771 440,766 507,766 514,760 541,760 546,758 554,739 580,739 588,723 596,697 604,651 612,631 620,629 629,600 636,537 645,457 654,457 662,452 669,415 678,374 803,374 810,369 817,357 826,345 842,345 850,309 864,309';
const sbDown = '864,309 877,309 882,308 884,309 891,324 899,324 907,326 916,344 932,344 939,349 982,349 990,388 1072,388 1088,443 1096,443 1105,465 1121,466 1129,488 1146,488 1154,493';

const byId = id => document.getElementById(id);
const reversed = pts => pts.split(' ').reverse().join(' ');

// Grid
const columns = Array.from({ length: 13 }, (_, i) => 94.5 + i * 115);
const rows = [190.5, 302.5, 413.5, 525.5, 637.5, 748.5];
byId('grid').innerHTML =
  `<path d="${columns.map(x => `M${x} 164V812`).join('')}${rows.map(y => `M9 ${y}H1518`).join('')}M9.5 164V812"/>` +
  '<path class="dashed" d="M9 257.5H1519M238.5 163V812M246.5 163V812"/>';

// Candles
byId('candles').innerHTML = bars.map((bar, i) => {
  const [high, top, bottom, low] = bar.slice(1).split(',').map(Number);
  const x = Math.floor(12.5 + i * 8.2143);
  const cls = bar[0] === 'b' ? 'up' : 'down';
  return `<path class="${cls}" d="M${x} ${high}h1V${low}h-1zM${x - 2} ${top}h5V${bottom}h-5z"/>`;
}).join('');

// Ichimoku
byId('clouds').innerHTML =
  `<polygon class="cloud-up" points="${saUp} ${reversed(sbUp)}"/>` +
  `<polygon class="cloud-down" points="${saDown} ${reversed(sbDown)}"/>`;
byId('lines').innerHTML = [['cs', cs], ['tl', tl], ['kl', kl], ['sa', `${saUp} ${saDown}`], ['sb', `${sbUp} ${sbDown}`]]
  .map(([cls, pts]) => `<polyline class="line ${cls}" points="${pts}"/>`).join('');

// Fibonacci and order levels: y, x from, x to, colour, dashes
byId('levels').innerHTML = [
  [201, 275, 1519, '#800080'],
  [461, 275, 1519, '#00ff00'],
  [697, 9, 1519, '#00ff00'],
  [712, 9, 1519, '#00ff00'],
  [719, 9, 1519, '#00ff00'],
  [721, 275, 1519, '#c0c0c0'],
  [217, 9, 932, '#d4b8e4', '3 3'],
  [217, 934, 1519, '#d4b8e4', '9 6 3 6'],
  [613, 9, 932, '#b4d09c', '3 3'],
  [613, 934, 1519, '#b4d09c', '9 6 3 6'],
  [787, 9, 1519, '#8098b8'],
  [787, 9, 932, '#ff5c5c', '3 3'],
  [787, 934, 1519, '#ff5c5c', '9 6 3 6'],
].map(([y, from, to, colour, dashes]) =>
  `<path d="M${from} ${y + 0.5}H${to}" stroke="${colour}" stroke-dasharray="${dashes || 'none'}"/>`).join('');

// Axes
let ticks = 'M9.5 163V149.5H1534.5V825.5H9.5V812';
for (const x of [61, 291, 406, 521, 636, 759, 882, 1005, 1326, 1523]) ticks += `M${x + 0.5} 149v7`;
for (const x of [118, 233, 348, 463, 578, 697, 820, 943, 1067, 1227, 1424]) ticks += `M${x + 0.5} 149v4`;
for (let k = -2; k <= 55; k++) {
  const y = Math.floor(190.4 + k * 11.17) + 0.5;
  const len = k % 10 === 0 ? 14 : k % 5 === 0 ? 8 : 5;
  ticks += `M1534 ${y}h${-len}`;
}
for (let k = -5; k <= 100; k++) {
  const x = Math.floor(94.5 + k * 14.375) + 0.5;
  const len = k % 8 === 0 ? 13 : k % 2 === 0 ? 6 : 3;
  ticks += `M${x} 825v${-len}`;
}
const days = [[176, '18/07'], [636, '19/07'], [1129, '20/07']];
const hours = [[324, '13:30'], [439, '17:00'], [554, '20:30'], [669, '19/07 10:00'], [784, '13:30'], [899, '17:00'],
  [1014, '20:30'], [1129, '20/07 00:00'], [1244, '03:30'], [1359, '07:00'], [1474, '10:30']];
byId('axes').innerHTML =
  '<path class="frame" d="M9 162.5H1519.5V812.5H9"/>' +
  `<path d="${ticks}"/>` +
  days.map(([x, label]) => `<path class="day" d="M${x - 4} 150h9l-4 10h-1z"/><text class="mid" x="${x}" y="144">${label}</text>`).join('') +
  hours.map(([x, label]) => `<text class="mid" x="${x}" y="843">${label}</text>`).join('') +
  rows.map((y, i) => `<text x="1537" y="${Math.floor(y) + 5}">12 ${775 - i * 25}</text>`).join('') +
  '<text x="9" y="843">17/07/2018 18:00</text>';
```
